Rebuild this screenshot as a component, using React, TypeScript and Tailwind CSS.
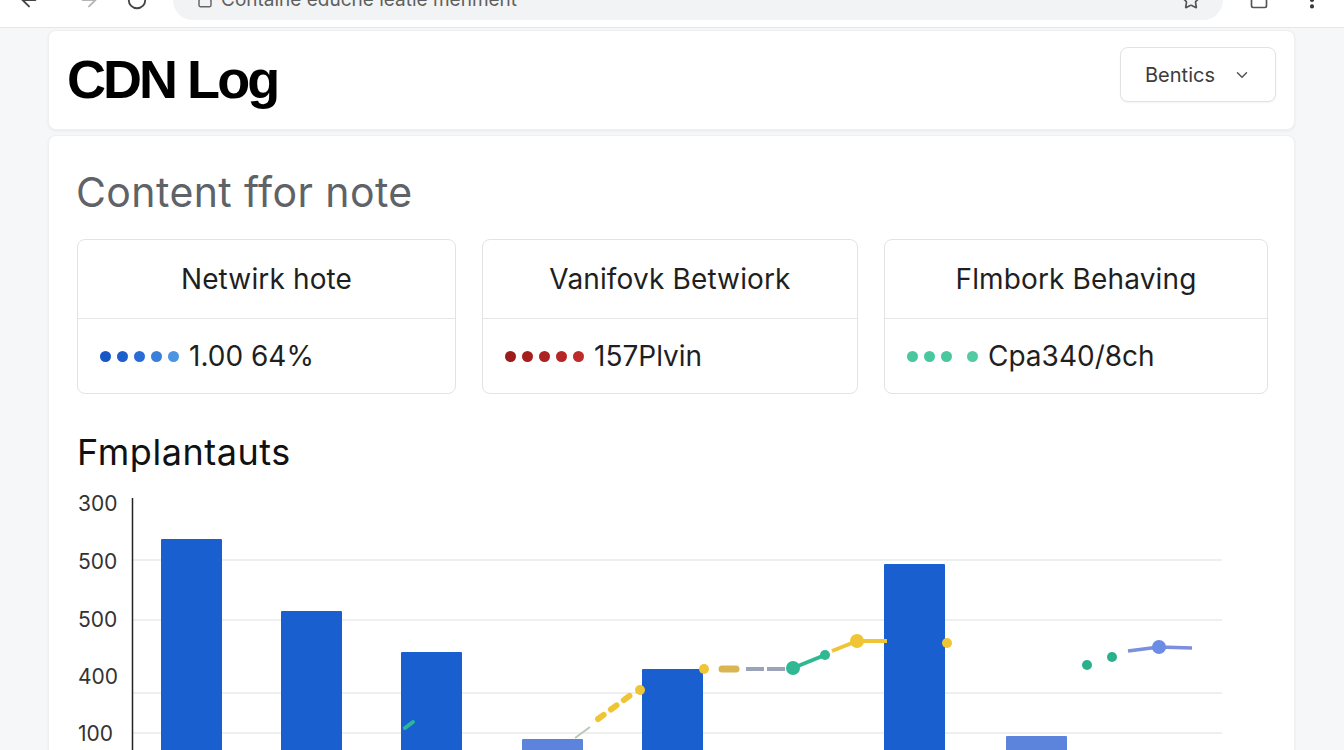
import React from "react";
import { ArrowLeft, ArrowRight, RotateCw, Star, Square, MoreVertical, Lock, ChevronDown } from "lucide-react";

type Card = {
  title: string;
  value: string;
  dots: (string | null)[];
};

const cards: Card[] = [
  {
    title: "Netwirk hote",
    value: "1.00 64%",
    dots: ["#1757c4", "#1c5fcc", "#2a6cd3", "#3a80da", "#4d95e0"],
  },
  {
    title: "Vanifovk Betwiork",
    value: "157Plvin",
    dots: ["#9c1c1c", "#a51f1f", "#ad2222", "#b52626", "#bf2b2b"],
  },
  {
    title: "Flmbork Behaving",
    value: "Cpa340/8ch",
    dots: ["#49c79e", "#49c79e", "#49c79e", null, "#52cba4"],
  },
];

// plot origin sits at the y axis, relative to the svg's left edge
const OX = 55;

const bars = [
  { x: 29, top: 49, light: false },
  { x: 149, top: 121, light: false },
  { x: 269, top: 162, light: false },
  { x: 390, top: 249, light: true },
  { x: 510, top: 179, light: false },
  { x: 752, top: 74, light: false },
  { x: 874, top: 246, light: true },
];

const yLabels = [
  { t: "300", y: 13 },
  { t: "500", y: 71 },
  { t: "500", y: 129 },
  { t: "400", y: 186 },
  { t: "100", y: 243 },
];

const grid = [70, 130, 203, 243];

function Chart() {
  return (
    <svg width={1150} height={262} viewBox="0 0 1150 262" className="block">
      {yLabels.map((l, i) => (
        <text
          key={i}
          x={1}
          y={l.y + 8}
          fontSize={21}
          fill="#333"
          fontFamily="Inter, 'Liberation Sans', sans-serif"
        >
          {l.t}
        </text>
      ))}
      <g transform={`translate(${OX},0)`}>
        {grid.map((g) => (
          <line key={g} x1={0} x2={1090} y1={g} y2={g} stroke="#e8eaed" strokeWidth={1.5} />
        ))}
        <line x1={0.5} x2={0.5} y1={8} y2={262} stroke="#222" strokeWidth={1.5} />
        {bars.map((b, i) => (
          <rect
            key={i}
            x={b.x}
            y={b.top}
            width={61}
            height={262 - b.top}
            rx={1}
            fill={b.light ? "#5c84dc" : "#1a5fd0"}
          />
        ))}

        {/* series overlays */}
        <line x1={273} y1={238} x2={281} y2={232} stroke="#2bb894" strokeWidth={4} strokeLinecap="round" />
        <line x1={443} y1={248} x2={458} y2={237} stroke="#b9c8b8" strokeWidth={2} />
        <line
          x1={466}
          y1={229}
          x2={500}
          y2={204}
          stroke="#f0c535"
          strokeWidth={6}
          strokeLinecap="round"
          strokeDasharray="7 9"
        />
        <circle cx={508} cy={200} r={5} fill="#f0c535" />

        <circle cx={572} cy={179} r={5} fill="#f0c535" />
        <line x1={590} y1={179} x2={604} y2={179} stroke="#d9b651" strokeWidth={7} strokeLinecap="round" />
        <line x1={614} y1={179} x2={656} y2={179} stroke="#9ba3b8" strokeWidth={4} strokeDasharray="18 3" />
        <line x1={661} y1={178} x2={693} y2={165} stroke="#2fb892" strokeWidth={4} />
        <circle cx={661} cy={178} r={7} fill="#2fb892" />
        <circle cx={693} cy={165} r={5} fill="#2fb892" />
        <line x1={700} y1={161} x2={725} y2={151} stroke="#f0c535" strokeWidth={4} />
        <line x1={725} y1={151} x2={755} y2={151} stroke="#f0c535" strokeWidth={4} />
        <circle cx={725} cy={151} r={7} fill="#f0c535" />
        <circle cx={815} cy={153} r={5} fill="#f0c535" />

        <circle cx={955} cy={175} r={5} fill="#2bb08c" />
        <circle cx={980} cy={167} r={5} fill="#2bb08c" />
        <line x1={996} y1={161} x2={1027} y2={157} stroke="#7b8fdc" strokeWidth={3.5} />
        <line x1={1027} y1={157} x2={1060} y2={158} stroke="#7b8fdc" strokeWidth={3.5} />
        <circle cx={1027} cy={157} r={7} fill="#6d8ce3" />
      </g>
    </svg>
  );
}

export default function App() {
  return (
    <div className="w-[1344px] h-[750px] overflow-hidden bg-[#f6f7f9] font-['Inter','Liberation_Sans',sans-serif] text-[#1f1f1f]">
      {/* browser toolbar, scrolled partly out of view */}
      <div className="h-[28px] bg-white border-b border-[#e6e6e6] overflow-hidden">
        <div className="-mt-[22px] h-[44px] flex items-center px-[18px]">
          <ArrowLeft className="w-[22px] h-[22px] text-[#444]" strokeWidth={2} />
          <ArrowRight className="ml-[38px] w-[22px] h-[22px] text-[#b5b5b5]" strokeWidth={2} />
          <RotateCw className="ml-[26px] w-[22px] h-[22px] text-[#444]" strokeWidth={2} />
          <div className="ml-[25px] w-[1050px] h-[40px] rounded-full bg-[#f1f3f4] flex items-center pl-[24px] pr-[22px]">
            <Lock className="w-[16px] h-[16px] text-[#666]" strokeWidth={2.2} />
            <span className="ml-[8px] text-[19px] leading-[24px] text-[#5f5f5f]">Containe eduche leatie menment</span>
            <Star className="ml-auto w-[20px] h-[20px] text-[#555]" strokeWidth={2} />
          </div>
          <Square className="ml-[26px] w-[20px] h-[20px] text-[#555]" strokeWidth={2} />
          <MoreVertical className="ml-[32px] w-[22px] h-[22px] text-[#333]" strokeWidth={2.5} />
        </div>
      </div>

      <div className="px-[48px] pt-[2px] pr-[49px]">
        {/* page header */}
        <div className="h-[100px] rounded-lg bg-white shadow-[0_1px_3px_rgba(0,0,0,0.06)] border border-[#f0f0f0] flex items-start justify-between pl-[18px] pr-[18px]">
          <h1 className="mt-[19px] font-['Liberation_Sans',Arial,sans-serif] font-bold text-[54px] leading-[58px] tracking-[-0.055em] text-black">
            CDN Log
          </h1>
          <button className="mt-[16px] h-[55px] w-[156px] rounded-lg border border-[#e2e2e2] bg-white shadow-[0_1px_2px_rgba(0,0,0,0.05)] flex items-center justify-center gap-[18px] text-[20px] text-[#3c3c3c]">
            Bentics
            <ChevronDown className="w-[18px] h-[18px] text-[#555]" strokeWidth={2} />
          </button>
        </div>

        {/* main panel */}
        <div className="mt-[5px] h-[700px] rounded-lg bg-white border border-[#f0f0f0] shadow-[0_1px_3px_rgba(0,0,0,0.05)] pl-[28px] pr-[26px] pt-[28px]">
          <h2 className="-ml-[1px] text-[41px] leading-[56px] text-[#5f6368] tracking-[0.01em]">Content ffor note</h2>

          <div className="mt-[19px] grid grid-cols-[379px_376px_1fr] gap-[26px]">
            {cards.map((c) => (
              <div key={c.title} className="rounded-lg border border-[#e3e3e3] bg-white">
                <div className="h-[79px] border-b border-[#e6e6e6] flex items-center justify-center text-[28px] tracking-[0.005em] text-[#1f1f1f]">
                  {c.title}
                </div>
                <div className="h-[74px] flex items-center pl-[22px] gap-[10px]">
                  <div className="flex items-center gap-[6px]">
                    {c.dots.map((d, i) =>
                      d ? (
                        <span key={i} className="w-[11px] h-[11px] rounded-full" style={{ backgroundColor: d }} />
                      ) : (
                        <span key={i} className="w-[3px] h-[11px]" />
                      )
                    )}
                  </div>
                  <span className="text-[28px] text-[#1f1f1f]">{c.value}</span>
                </div>
              </div>
            ))}
          </div>

          <h3 className="mt-[38px] text-[36px] leading-[40px] tracking-[0.015em] text-[#111]">Fmplantauts</h3>

          <div className="mt-[18px]">
            <Chart />
          </div>
        </div>
      </div>
    </div>
  );
}
